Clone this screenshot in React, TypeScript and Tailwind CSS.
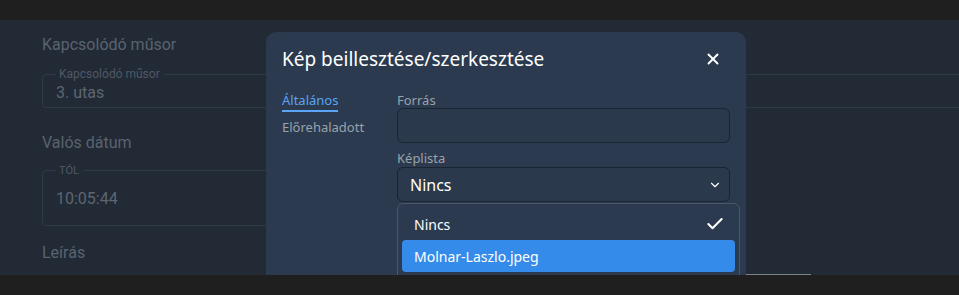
import React from 'react';
import { X, ChevronDown, Check } from 'lucide-react';

const bgFont = { fontFamily: 'Roboto, "Liberation Sans", sans-serif' };

const OutlinedField: React.FC<{ legend: string; value: string; className: string; legendClass?: string }> = ({ legend, value, className, legendClass }) => (
    <fieldset className={`border border-[#303a47] rounded-[4px] pl-[13px] ${className}`}>
        <legend className={`ml-[-1px] px-[4px] text-[#4f5866] leading-none ${legendClass ?? 'text-[12px]'}`}>{legend}</legend>
        <div className="text-[16px] text-[#5d6673]">{value}</div>
    </fieldset>
);

const App: React.FC = () => {
    return (
        <div className="w-[959px] h-[295px] flex flex-col bg-[#1f1f1f] overflow-hidden" style={bgFont}>
            <div className="h-[20px] bg-[#1f1f1f]" />

            <div className="relative flex-1 bg-[#222a35] overflow-hidden">
                {/* Background form (dimmed) */}
                <div className="pl-[42px] pt-[15px]">
                    <div className="text-[16px] text-[#5a6370] leading-[20px]">Kapcsolódó műsor</div>
                    <OutlinedField
                        legend="Kapcsolódó műsor"
                        value="3. utas"
                        className="mt-[13px] w-[1000px] h-[40px] pt-[1px]"
                    />
                    <div className="mt-[25px] text-[16px] text-[#5a6370] leading-[20px]">Valós dátum</div>
                    <OutlinedField
                        legend="TÓL"
                        value="10:05:44"
                        className="mt-[12px] w-[650px] h-[61px] pt-[11px]"
                        legendClass="text-[11px]"
                    />
                    <div className="mt-[17px] text-[16px] text-[#5a6370] leading-[20px]">Leírás</div>
                </div>

                <div className="absolute left-[706px] bottom-0 w-[105px] h-px bg-[#7d838b]" />

                {/* Modal */}
                <div
                    className="absolute left-[266px] top-[12px] w-[480px] h-[260px] bg-[#2b3a4e] rounded-t-[10px]"
                    style={{ fontFamily: '"Noto Sans", "Open Sans", sans-serif' }}
                >
                    <div className="flex items-center justify-between pl-[16px] pr-[24px] pt-[13px]">
                        <h2 className="text-[19px] text-white leading-[28px]">Kép beillesztése/szerkesztése</h2>
                        <X size={18} strokeWidth={2.5} className="text-white" />
                    </div>

                    <div className="flex mt-[18px] pl-[16px]">
                        <div className="w-[115px] flex flex-col">
                            <span className="self-start text-[13px] text-[#5aa5f5] leading-[18px] border-b-2 border-[#5aa5f5] pb-[1px]">
                                Általános
                            </span>
                            <span className="mt-[6px] text-[13px] text-[#9aa2ac] leading-[18px]">Előrehaladott</span>
                        </div>

                        <div className="w-[333px] flex flex-col">
                            <label className="text-[13px] text-[#9aa2ac] leading-[16px] mt-[1px]">Forrás</label>
                            <div className="h-[35px] rounded-[6px] border border-[#1a2433] bg-[#2a394c]" />
                            <label className="mt-[7px] text-[13px] text-[#9aa2ac] leading-[16px]">Képlista</label>
                            <div className="relative mt-[1px]">
                                <div className="h-[35px] rounded-[6px] border border-[#1a2433] bg-[#2a394c] flex items-center justify-between pl-[12px] pr-[7px]">
                                    <span className="text-[16px] text-white">Nincs</span>
                                    <ChevronDown size={14} strokeWidth={2} className="text-white" />
                                </div>
                                <div className="absolute left-0 top-[36px] w-[343px] h-[80px] rounded-[6px] border border-[#4b5768] bg-[#2b3a4e] px-[4px] pt-[4px]">
                                    <div className="h-[32px] flex items-center justify-between pl-[12px] pr-[10px]">
                                        <span className="text-[14px] text-white">Nincs</span>
                                        <Check size={20} strokeWidth={2.5} className="text-white" />
                                    </div>
                                    <div className="h-[32px] rounded-[4px] bg-[#358be9] flex items-center pl-[12px]">
                                        <span className="text-[14px] text-white">Molnar-Laszlo.jpeg</span>
                                    </div>
                                </div>
                            </div>
                        </div>
                    </div>
                </div>
            </div>

            <div className="h-[20px] bg-[#1f1f1f]" />
        </div>
    );
};

export default App;
